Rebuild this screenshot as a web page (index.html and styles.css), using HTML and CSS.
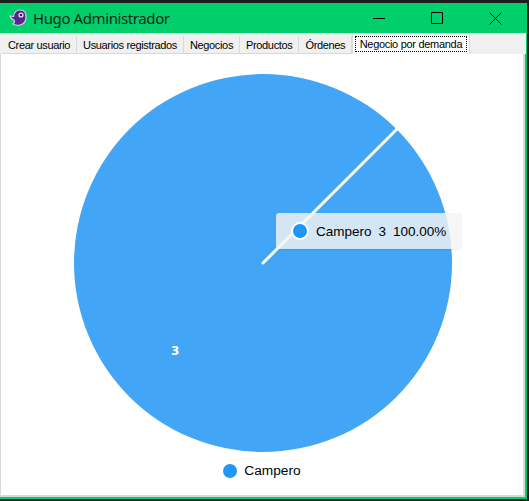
FILE: index.html
```html
<!DOCTYPE html>
<html lang="en">
<head>
    <meta charset="UTF-8">
    <title>Hugo Administrador</title>
    <link rel="stylesheet" href="styles.css">
</head>
<body>
    <div class="window">
        <div class="titlebar">
            <svg class="app-icon" width="18" height="18" viewBox="0 0 18 18">
                <path d="M1 7 L4.5 7.5 C5 3 8 1 11.5 1 C15 1 17 4 17 8 C17 12 15 15 11 16 C8 17 6 16 4 15 C5.5 14 6 12.5 5 11 C3 10.5 1.5 9 1 7 Z" fill="#53288a" stroke="#d9cde8" stroke-width="1.2"/>
                <circle cx="12" cy="6" r="2.6" fill="#e6def0"/>
                <circle cx="12" cy="6" r="1.3" fill="#341a5e"/>
            </svg>
            <span class="title">Hugo Administrador</span>
            <div class="controls">
                <svg class="ctl-min" width="12" height="12" viewBox="0 0 12 12"><path d="M0 6.5H12" stroke="#000" fill="none"/></svg>
                <svg class="ctl-max" width="12" height="12" viewBox="0 0 12 12"><path d="M.5.5H11.5V11.5H.5Z" stroke="#000" fill="none"/></svg>
                <svg class="ctl-close" width="13" height="13" viewBox="0 0 13 13"><path d="M.5.5L12.5 12.5M12.5.5L.5 12.5" stroke="#000" fill="none"/></svg>
            </div>
        </div>
        <div class="tabs">
            <div class="tab">Crear usuario</div>
            <div class="tab">Usuarios registrados</div>
            <div class="tab">Negocios</div>
            <div class="tab">Productos</div>
            <div class="tab">Órdenes</div>
            <div class="tab active"><span>Negocio por demanda</span></div>
        </div>
        <div class="panel">
            <div class="chart">
                <svg class="pie" width="378" height="378" viewBox="0 0 378 378">
                    <circle cx="189" cy="189" r="189" fill="#42a5f5"/>
                    <path d="M189 189L323 55" stroke="#fff" stroke-width="3" stroke-linecap="round"/>
                    <text class="pie-label" x="97" y="281">3</text>
                </svg>
                <div class="tooltip">
                    <span class="dot dot-ring"></span>
                    <span>Campero</span><span>3</span><span>100.00%</span>
                </div>
            </div>
            <div class="legend"><span class="dot"></span>Campero</div>
        </div>
    </div>
</body>
</html>
```
FILE: styles.css
```css
* {
    box-sizing: border-box;
}
body {
    margin: 0;
    height: 501px;
    overflow: hidden;
    background: #1e1e1e;
    font-family: "Liberation Sans", Arial, sans-serif;
    padding-top: 3px;
}
.window {
    height: 496px;
    width: 527px;
    background: #00cf6b;
    padding-right: 1px;
    padding-bottom: 2px;
    display: flex;
    flex-direction: column;
}
.titlebar {
    height: 30px;
    display: flex;
    align-items: center;
    padding-left: 9px;
    margin-right: -1px;
}
.app-icon {
    margin-right: 6px;
}
.title {
    font-family: "Noto Sans", sans-serif;
    font-size: 15px;
    letter-spacing: -0.4px;
    color: #0a2a18;
}
.controls {
    margin-left: auto;
    display: flex;
    align-items: center;
    padding-right: 25px;
}
.ctl-max {
    margin-left: 46px;
}
.ctl-close {
    margin-left: 46px;
}
.tabs {
    height: 21px;
    background: #f0f0f0;
    display: flex;
    align-items: flex-end;
    padding-left: 2px;
    font-size: 11px;
    letter-spacing: -0.35px;
    color: #000;
}
.tab {
    height: 18px;
    line-height: 19px;
    padding: 0 6px;
    border-right: 1px solid #d9d9d9;
    border-bottom: 1px solid #d9d9d9;
}
.tab.active {
    height: 21px;
    background: #fff;
    border: 1px solid #d9d9d9;
    border-bottom: none;
    padding: 2px 1.5px 0;
    letter-spacing: -0.3px;
}
.tab.active span {
    display: block;
    height: 16px;
    line-height: 14px;
    padding: 0 4px;
    border: 1px dotted #000;
}
.panel {
    flex: 1;
    background: #fff;
    border: 2px solid #d9d9d9;
    border-top: none;
    border-left-width: 1px;
    margin-right: 1px;
    display: flex;
    flex-direction: column;
    align-items: center;
}
.chart {
    position: relative;
    width: 378px;
    height: 378px;
    margin-top: 20px;
    margin-left: 2px;
}
.pie {
    display: block;
}
.pie-label {
    fill: #fff;
    font: bold 12px "DejaVu Sans", sans-serif;
}
.tooltip {
    position: absolute;
    left: 202px;
    top: 139px;
    width: 186px;
    height: 36px;
    display: flex;
    align-items: center;
    gap: 7px;
    padding-left: 15px;
    border-radius: 3px;
    background: rgba(244, 244, 244, 0.82);
    box-shadow: 0 1px 1px rgba(0, 0, 0, 0.06);
    font-size: 13.5px;
    color: #000;
}
.dot {
    display: inline-block;
    width: 14px;
    height: 14px;
    border-radius: 50%;
    background: #2196f3;
}
.dot-ring {
    width: 18px;
    height: 18px;
    border: 2px solid #fff;
}
.legend {
    display: flex;
    align-items: center;
    gap: 7px;
    margin-top: 11px;
    font-size: 13.7px;
    color: #000;
}
```
